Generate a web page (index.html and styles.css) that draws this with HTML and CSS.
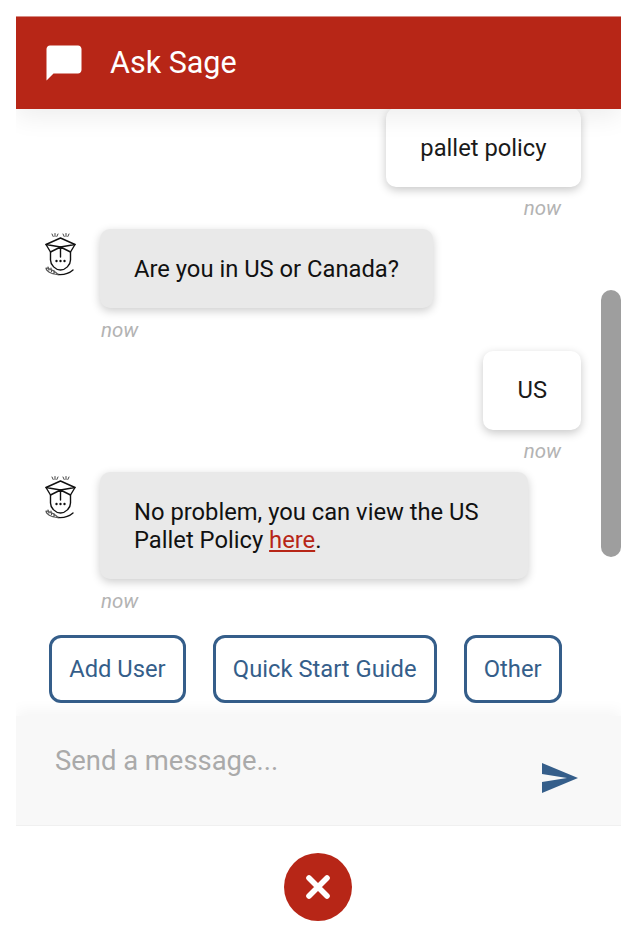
FILE: index.html
```html
<!DOCTYPE html>
<html lang="en">
<head>
<meta charset="utf-8">
<title>Ask Sage</title>
<link rel="stylesheet" href="styles.css">
</head>
<body>
<main class="widget">
  <header class="head">
    <svg class="head-icon" viewBox="0 0 24 24" width="42" height="42"><path fill="#fff" d="M20 2H4c-1.100 0-2 .9-2 2v18l4-4h14c1.100 0 2-.9 2-2V4c0-1.100-.9-2-2-2z"/></svg>
    <h1 class="head-title">Ask Sage</h1>
  </header>
  <section class="log">
    <div class="msg msg-user">
      <div class="bubble bubble-user bubble-first">pallet policy</div>
      <div class="stamp stamp-first">now</div>
    </div>
    <div class="msg msg-bot">
      <svg class="avatar" viewBox="0 0 34 44" width="34" height="44"><use href="#sage"/></svg>
      <div class="bot-col">
        <div class="bubble bubble-bot">Are you in US or Canada?</div>
        <div class="stamp">now</div>
      </div>
    </div>
    <div class="msg msg-user">
      <div class="bubble bubble-user">US</div>
      <div class="stamp">now</div>
    </div>
    <div class="msg msg-bot">
      <svg class="avatar" viewBox="0 0 34 44" width="34" height="44"><use href="#sage"/></svg>
      <div class="bot-col">
        <div class="bubble bubble-bot">No problem, you can view the US Pallet Policy <a class="link" href="#">here</a>.</div>
        <div class="stamp">now</div>
      </div>
    </div>
    <div class="next-edge"></div>
    <div class="thumb"></div>
  </section>
  <nav class="quick">
    <button class="chip">Add User</button>
    <button class="chip">Quick Start Guide</button>
    <button class="chip">Other</button>
  </nav>
  <form class="composer">
    <div class="placeholder">Send a message...</div>
    <svg class="send" viewBox="0 0 36 30" width="36" height="30"><path fill="#355e8a" d="M0 0 36 15 0 30V19L25 15 0 11z"/></svg>
  </form>
</main>
<div class="close-row">
  <button class="close" aria-label="Close">
    <svg viewBox="0 0 26 26" width="26" height="26"><path d="M4 4 22 22M22 4 4 22" stroke="#fff" stroke-width="5.600" stroke-linecap="round"/></svg>
  </button>
</div>
<svg class="defs" width="0" height="0">
  <symbol id="sage" viewBox="0 0 34 44">
    <g fill="none" stroke="#111" stroke-width="1.400" stroke-linejoin="round" stroke-linecap="round">
      <path d="M7 1l1.200 2.500M10 .5v3M13 1l-1.200 2.500M18 1l1.200 2.500M21 .5v3M24 1l-1.200 2.500" stroke="#444" stroke-width="1"/>
      <path d="M15.500 5 30 11.500 15.500 14 1 11.500z"/>
      <path d="M1 11.500 5.500 19 15.500 14 25.500 19 30 11.500M15.500 14V24"/>
      <path d="M5.500 19V27c0 5 5 10 10 10s10-5 10-10V19"/>
      <path d="M13 41.500c6 .5 11-1 15-4.500"/>
      <path d="M1 35c3 0 9 3 12 6.500M1 35c0 3 5 6 11 6.500M3 34l1 3M6 35l.5 3.500M9 37.500l0 3" stroke="#555" stroke-width="1.200"/>
    </g>
    <g fill="#111"><circle cx="11.500" cy="28" r="1.200"/><circle cx="15.500" cy="28" r="1.200"/><circle cx="19.500" cy="28" r="1.200"/></g>
  </symbol>
</svg>
</body>
</html>
```
FILE: styles.css
```css
* { box-sizing: border-box; }
html, body { margin: 0; padding: 0; background: #fff; }
body { width: 630px; height: 928px; padding: 16px 9px 0 16px; overflow: hidden; font-family: Roboto, "Liberation Sans", sans-serif; }
.widget { display: flex; flex-direction: column; width: 605px; height: 810px; background: #fff; overflow: hidden; }
.head { position: relative; z-index: 2; flex: none; display: flex; align-items: center; gap: 25px; height: 93px; padding: 0 0 0 27px; background: #b72617; border-top: 1px solid #d78c84; box-shadow: 0 8px 24px rgba(0,0,0,.07); }
.head-icon { flex: none; }
.head-title { margin: 0; font-size: 30.500px; font-weight: 400; color: #fff; line-height: 36px; }
.log { position: relative; flex: none; height: 511px; padding: 0 40px 0 29px; overflow: hidden; display: flex; flex-direction: column; }
.msg { display: flex; flex: none; }
.msg-user { flex-direction: column; align-items: flex-end; }
.msg-bot { gap: 21px; align-items: flex-start; }
.avatar { flex: none; margin-top: 4px; }
.bot-col { display: flex; flex-direction: column; align-items: flex-start; }
.bubble { font-size: 23.750px; line-height: 28px; padding: 25.500px 34px; border-radius: 10px; color: #1a1a1a; }
.bubble-user { background: #fff; box-shadow: 0 3px 10px rgba(0,0,0,.22); }
.bubble-first { margin-top: -1px; padding-left: 34.500px; padding-right: 34.500px; }
.bubble-bot { max-width: 428px; background: #e9e9e9; color: #111; box-shadow: 0 3px 10px rgba(0,0,0,.2); }
.stamp { font-size: 20.500px; line-height: 21px; font-style: italic; color: #b3b3b3; margin-top: 11px; margin-bottom: 10.500px; }
.stamp-first { margin-bottom: 10.200px; }
.msg-user .stamp { padding-right: 20px; }
.msg-bot .stamp { padding-left: 1px; margin-top: 12px; margin-bottom: 9.500px; }
.link { color: #b72617; }
.next-edge { flex: none; width: 415px; height: 60px; margin: 8.500px 0 0 55px; border-radius: 10px; background: #fff; box-shadow: 0 0 10px rgba(0,0,0,.12); }
.thumb { position: absolute; right: 0; top: 181px; width: 20px; height: 267px; border-radius: 10px; background: #9e9e9e; }
.quick { position: relative; z-index: 1; flex: none; display: flex; gap: 26.800px; height: 96px; padding: 15px 0 0 33px; background: #fff; }
.chip { height: 68px; padding: 0 17.200px; background: #fff; border: 3px solid #355e8a; border-radius: 12px; color: #355e8a; font: 400 23.750px/28px Roboto, "Liberation Sans", sans-serif; }
.composer { position: relative; z-index: 1; flex: none; height: 110px; padding: 29px 0 0 39px; background: #f8f8f8; border-bottom: 1px solid #f0f0f0; box-shadow: 0 -6px 14px rgba(0,0,0,.04); }
.placeholder { font-size: 27.400px; line-height: 32px; color: #aaa; }
.send { position: absolute; right: 43px; top: 47px; }
.close-row { display: flex; justify-content: center; padding: 27px 1px 0 0; }
.close { display: flex; align-items: center; justify-content: center; width: 68px; height: 68px; padding: 0; border: 0; border-radius: 50%; background: #b72617; }
.defs { position: absolute; }
```
